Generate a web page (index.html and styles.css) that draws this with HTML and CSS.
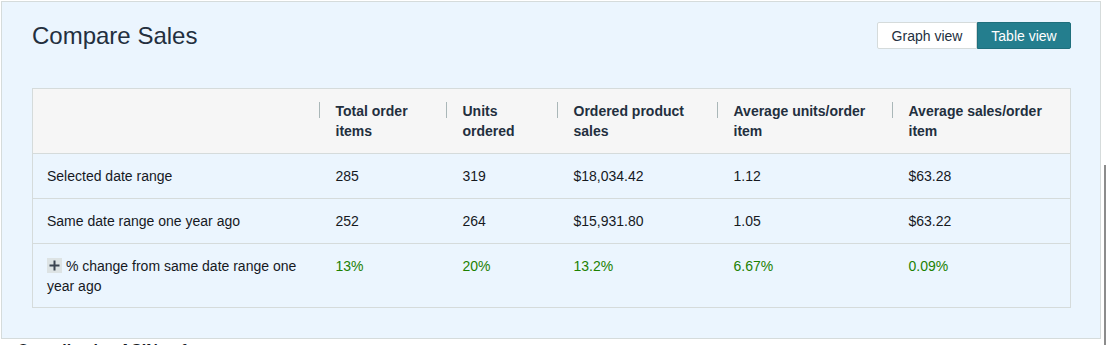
FILE: index.html
```html
<!DOCTYPE html>
<html lang="en">
<head>
<meta charset="utf-8">
<title>Compare Sales</title>
<link rel="stylesheet" href="styles.css">
</head>
<body>
<section class="panel">
  <div class="panel-head">
    <h2 class="title">Compare Sales</h2>
    <div class="toggle">
      <button class="toggle-btn">Graph view</button>
      <button class="toggle-btn active">Table view</button>
    </div>
  </div>
  <table class="data">
    <colgroup>
      <col class="c1"><col class="c2"><col class="c3"><col class="c4"><col class="c5"><col class="c6">
    </colgroup>
    <thead>
      <tr>
        <th></th>
        <th class="sep">Total order items</th>
        <th class="sep">Units ordered</th>
        <th class="sep">Ordered product sales</th>
        <th class="sep">Average units/order item</th>
        <th class="sep">Average sales/order item</th>
      </tr>
    </thead>
    <tbody>
      <tr>
        <td class="label">Selected date range</td>
        <td>285</td><td>319</td><td>$18,034.42</td><td>1.12</td><td>$63.28</td>
      </tr>
      <tr>
        <td class="label">Same date range one year ago</td>
        <td>252</td><td>264</td><td>$15,931.80</td><td>1.05</td><td>$63.22</td>
      </tr>
      <tr class="last">
        <td class="label"><svg class="expand" width="15" height="15" viewBox="0 0 15 15" aria-hidden="true"><rect width="15" height="15" fill="#dde3e4"/><path d="M2.5 7.5h10M7.5 2.5v10" stroke="#3b4450" stroke-width="2"/></svg> % change from same date range one year ago</td>
        <td class="up">13%</td><td class="up">20%</td><td class="up">13.2%</td><td class="up">6.67%</td><td class="up">0.09%</td>
      </tr>
    </tbody>
  </table>
</section>
<h3 class="next">Overall sales ASINs of</h3>
<div class="scroll-edge"></div>
</body>
</html>
```
FILE: styles.css
```css
html, body {
  margin: 0;
  padding: 0;
  background: #ffffff;
  font-family: "Liberation Sans", Arial, sans-serif;
  color: #16191f;
  overflow: hidden;
}

body {
  width: 1106px;
  height: 345px;
  position: relative;
}

.panel {
  margin: 1px 0 0 1px;
  width: 1100px;
  box-sizing: border-box;
  height: 338px;
  border: 1px solid #d5dbdb;
  background: #ebf5fe;
  padding: 20px 29px 30px 30px;
}

.panel-head {
  display: flex;
  justify-content: space-between;
  align-items: flex-start;
  height: 28px;
  margin-bottom: 38px;
}

.title {
  margin: 0;
  font-weight: normal;
  font-size: 24px;
  line-height: 28px;
  color: #232f3e;
}

.toggle {
  display: flex;
  height: 27px;
}

.toggle-btn {
  font-family: "Liberation Sans", Arial, sans-serif;
  font-size: 14px;
  height: 27px;
  padding: 0 13px;
  margin: 0;
  border: 1px solid #d5dbdb;
  background: #ffffff;
  color: #232f3e;
  border-radius: 2px 0 0 2px;
  width: 100px;
}

.toggle-btn.active {
  width: 94px;
  background: #247e8e;
  border-color: #1f6f7c;
  color: #ffffff;
  border-radius: 0 2px 2px 0;
}

.data {
  width: 1038px;
  table-layout: fixed;
  border-collapse: collapse;
  border: 1px solid #d5dbdb;
  font-size: 14px;
  line-height: 20px;
}

.c1 { width: 286px; }
.c2 { width: 127px; }
.c3 { width: 111px; }
.c4 { width: 160px; }
.c5 { width: 175px; }
.c6 { width: 179px; }

.data th {
  background: #f6f6f6;
  text-align: left;
  font-weight: bold;
  color: #232f3e;
  padding: 12px 8px 12px 17px;
  vertical-align: top;
  position: relative;
  border-bottom: 1px solid #d5dbdb;
}

.data th.sep::before {
  content: "";
  position: absolute;
  left: 0;
  top: 13px;
  width: 1px;
  height: 16px;
  background: #aab7b8;
}

.data td {
  padding: 12px 16px 12px 17px;
  vertical-align: top;
  border-bottom: 1px solid #d5dbdb;
  color: #16191f;
}

.data tr.last td {
  padding-bottom: 11px;
}

.data td.label {
  padding-left: 14px;
  padding-right: 10px;
}

.data td.up {
  color: #1d8102;
}

.expand {
  display: inline-block;
  vertical-align: -2px;
}

.next {
  margin: 2px 0 0 17px;
  font-size: 16px;
  line-height: 20px;
  font-weight: bold;
  color: #16191f;
}

.scroll-edge {
  position: absolute;
  left: 1104px;
  top: 165px;
  width: 2px;
  height: 180px;
  background: #8c8c8c;
}
```
